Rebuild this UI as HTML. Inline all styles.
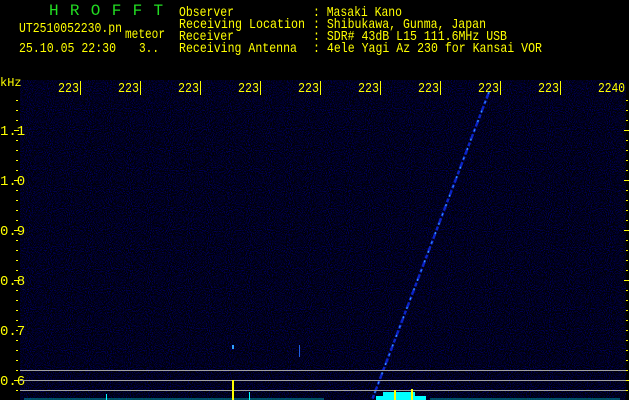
<!DOCTYPE html>
<html><head><meta charset="utf-8"><style>
html,body{margin:0;padding:0;background:#000;width:629px;height:400px;overflow:hidden}
svg{display:block}
text{font-family:"Liberation Mono","DejaVu Sans Mono",monospace;fill:#ffff00;font-size:14px}
</style></head><body>
<svg width="629" height="400" xmlns="http://www.w3.org/2000/svg">
<defs>
<filter id="n" x="0" y="0" width="100%" height="100%">
<feTurbulence type="fractalNoise" baseFrequency="0.95" numOctaves="1" seed="3"/>
<feColorMatrix values="0 0 0 0 0  0 0 0 0 0  0 0 0 0 0.9  0 0 0 -7 3.6"/>
</filter>
</defs>
<rect width="629" height="400" fill="#000"/>
<rect x="20" y="80" width="606" height="320" fill="#010108"/>
<rect x="20" y="80" width="606" height="320" filter="url(#n)" opacity="0.35"/>
<!-- header -->
<text x="49" y="15" style="fill:#22dd22;font-size:16px" letter-spacing="11.3">HROFFT</text>
<text x="19" y="32" textLength="103" lengthAdjust="spacingAndGlyphs">UT2510052230.pn</text>
<text x="125" y="38" textLength="40" lengthAdjust="spacingAndGlyphs">meteor</text>
<text x="19" y="52" textLength="97" lengthAdjust="spacingAndGlyphs">25.10.05 22:30</text>
<text x="139" y="52" textLength="20" lengthAdjust="spacingAndGlyphs">3..</text>
<text x="179" y="16" textLength="55" lengthAdjust="spacingAndGlyphs">Observer</text>
<text x="179" y="28" textLength="126" lengthAdjust="spacingAndGlyphs">Receiving Location</text>
<text x="179" y="40" textLength="55" lengthAdjust="spacingAndGlyphs">Receiver</text>
<text x="179" y="52" textLength="118" lengthAdjust="spacingAndGlyphs">Receiving Antenna</text>
<text x="313" y="16" textLength="89" lengthAdjust="spacingAndGlyphs">: Masaki Kano</text>
<text x="313" y="28" textLength="173" lengthAdjust="spacingAndGlyphs">: Shibukawa, Gunma, Japan</text>
<text x="313" y="40" textLength="194" lengthAdjust="spacingAndGlyphs">: SDR# 43dB L15 111.6MHz USB</text>
<text x="313" y="52" textLength="229" lengthAdjust="spacingAndGlyphs">: 4ele Yagi Az 230 for Kansai VOR</text>
<!-- freq labels -->
<text x="0" y="86" style="font-size:12px">kHz</text>
<g style="font-size:14px">
<text x="58" y="92" textLength="21" lengthAdjust="spacingAndGlyphs">223</text><text x="118" y="92" textLength="21" lengthAdjust="spacingAndGlyphs">223</text><text x="178" y="92" textLength="21" lengthAdjust="spacingAndGlyphs">223</text>
<text x="238" y="92" textLength="21" lengthAdjust="spacingAndGlyphs">223</text><text x="298" y="92" textLength="21" lengthAdjust="spacingAndGlyphs">223</text><text x="358" y="92" textLength="21" lengthAdjust="spacingAndGlyphs">223</text>
<text x="418" y="92" textLength="21" lengthAdjust="spacingAndGlyphs">223</text><text x="478" y="92" textLength="21" lengthAdjust="spacingAndGlyphs">223</text><text x="538" y="92" textLength="21" lengthAdjust="spacingAndGlyphs">223</text>
<text x="598" y="92" textLength="27" lengthAdjust="spacingAndGlyphs">2240</text>
</g>
<g fill="#ffff00">
<rect x="80" y="81" width="1" height="14"/><rect x="140" y="81" width="1" height="14"/>
<rect x="200" y="81" width="1" height="14"/><rect x="260" y="81" width="1" height="14"/>
<rect x="320" y="81" width="1" height="14"/><rect x="380" y="81" width="1" height="14"/>
<rect x="440" y="81" width="1" height="14"/><rect x="500" y="81" width="1" height="14"/>
<rect x="560" y="81" width="1" height="14"/>
</g>
<!-- y axis -->
<g id="ticks" fill="#ffff00">
<rect x="16" y="100" width="2" height="1"/><rect x="16" y="110" width="2" height="1"/><rect x="16" y="120" width="2" height="1"/><rect x="14" y="130" width="5" height="1"/><rect x="16" y="140" width="2" height="1"/><rect x="16" y="150" width="2" height="1"/><rect x="16" y="160" width="2" height="1"/><rect x="16" y="170" width="2" height="1"/><rect x="14" y="180" width="5" height="1"/><rect x="16" y="190" width="2" height="1"/><rect x="16" y="200" width="2" height="1"/><rect x="16" y="210" width="2" height="1"/><rect x="16" y="220" width="2" height="1"/><rect x="14" y="230" width="5" height="1"/><rect x="16" y="240" width="2" height="1"/><rect x="16" y="250" width="2" height="1"/><rect x="16" y="260" width="2" height="1"/><rect x="16" y="270" width="2" height="1"/><rect x="14" y="280" width="5" height="1"/><rect x="16" y="290" width="2" height="1"/><rect x="16" y="300" width="2" height="1"/><rect x="16" y="310" width="2" height="1"/><rect x="16" y="320" width="2" height="1"/><rect x="16" y="330" width="2" height="1"/><rect x="16" y="340" width="2" height="1"/><rect x="16" y="350" width="2" height="1"/><rect x="16" y="360" width="2" height="1"/><rect x="16" y="370" width="2" height="1"/><rect x="14" y="380" width="5" height="1"/><rect x="16" y="390" width="2" height="1"/>
</g>
<use href="#ticks" x="610"/>
<g style="font-size:14px">
<text x="0" y="135">1.1</text><text x="0" y="185">1.0</text><text x="0" y="235">0.9</text>
<text x="0" y="285">0.8</text><text x="0" y="335">0.7</text><text x="0" y="385">0.6</text>
</g>
<!-- meteor trail -->
<line x1="489" y1="92" x2="372" y2="400" stroke="#0c24c8" stroke-width="2.5" stroke-dasharray="7 2 4 2"/>
<line x1="489" y1="92" x2="372" y2="400" stroke="#40b0ff" stroke-width="1" stroke-dasharray="2 8"/>
<rect x="232" y="345" width="2" height="4" fill="#30a0ff"/>
<rect x="299" y="345" width="1" height="12" fill="#2060e0"/>
<!-- gray lines -->
<rect x="20" y="370" width="606" height="1" fill="#a0a0a0"/>
<rect x="20" y="380" width="606" height="1" fill="#a0a0a0"/>
<rect x="20" y="390" width="606" height="1" fill="#a0a0a0"/>
<!-- bottom histogram -->
<rect x="383" y="392" width="32" height="8" fill="#00ffff"/>
<rect x="376" y="396" width="50" height="4" fill="#00ffff"/>
<g fill="#00ffff">
<rect x="24" y="398" width="300" height="2" opacity="0.3"/>
<rect x="430" y="398" width="190" height="2" opacity="0.3"/>
<rect x="106" y="394" width="1" height="6"/><rect x="249" y="392" width="1" height="8"/>
</g>
<rect x="232" y="380" width="2" height="20" fill="#ffff00"/>
<rect x="394" y="390" width="2" height="10" fill="#ffff00"/>
<rect x="411" y="389" width="2" height="11" fill="#ffff00"/>
</svg>
</body></html>
